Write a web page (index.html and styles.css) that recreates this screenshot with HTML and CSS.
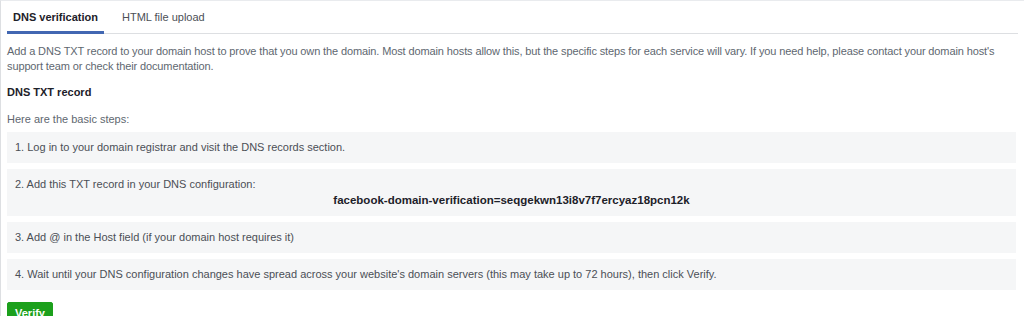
FILE: index.html
```html
<!DOCTYPE html>
<html lang="en">
<head>
    <meta charset="UTF-8">
    <title>Domain verification</title>
    <link rel="stylesheet" href="styles.css">
</head>
<body>
    <div class="panel">
        <div class="tabs">
            <div class="tab active">DNS verification</div>
            <div class="tab">HTML file upload</div>
        </div>
        <div class="content">
            <p class="intro">Add a DNS TXT record to your domain host to prove that you own the domain. Most domain hosts allow this, but the specific steps for each service will vary. If you need help, please contact your domain host's support team or check their documentation.</p>
            <h4 class="title">DNS TXT record</h4>
            <p class="lead">Here are the basic steps:</p>
            <div class="steps">
                <div class="step">1. Log in to your domain registrar and visit the DNS records section.</div>
                <div class="step">
                    2. Add this TXT record in your DNS configuration:
                    <div class="record">facebook-domain-verification=seqgekwn13i8v7f7ercyaz18pcn12k</div>
                </div>
                <div class="step">3. Add @ in the Host field (if your domain host requires it)</div>
                <div class="step">4. Wait until your DNS configuration changes have spread across your website's domain servers (this may take up to 72 hours), then click Verify.</div>
            </div>
            <button class="verify">Verify</button>
        </div>
    </div>
</body>
</html>
```

FILE: styles.css
```css
body {
    margin: 0;
    background: #ffffff;
    font-family: "Liberation Sans", Arial, sans-serif;
    font-size: 11px;
    color: #606770;
}

.panel {
    border-left: 1px solid #dddfe2;
    border-top: 1px solid #e9ebee;
    height: 316px;
    overflow: hidden;
    box-sizing: border-box;
}

.tabs {
    display: flex;
    gap: 12px;
    margin: 0 6px 0 6px;
    border-bottom: 1px solid #dddfe2;
}

.tab {
    padding: 10px 6px 7px;
    margin-bottom: -1px;
    border-bottom: 3px solid transparent;
    color: #4b4f56;
    font-size: 11px;
    line-height: 13px;
}

.tab.active {
    font-weight: bold;
    color: #1d2129;
    border-bottom-color: #4267b2;
}

.content {
    padding: 10px 8px 0 6px;
}

.intro {
    margin: 0 -6px 0 0;
    line-height: 15px;
    letter-spacing: -0.12px;
}

.title {
    margin: 10px 0 0;
    font-size: 11px;
    line-height: 16px;
    color: #1d2129;
}

.lead {
    margin: 11px 0 0;
    line-height: 16px;
}

.steps {
    display: flex;
    flex-direction: column;
    gap: 6px;
    margin-top: 5px;
}

.step {
    background: #f5f6f7;
    padding: 7px 8px 8px;
    line-height: 16px;
    color: #4b4f56;
}

.record {
    text-align: center;
    font-size: 11.5px;
    font-weight: bold;
    color: #1d2129;
}

.verify {
    display: block;
    margin-top: 12px;
    padding: 0 7px;
    height: 22px;
    border: 1px solid #1ca01c;
    border-radius: 2px;
    background: #1ca01c;
    color: #ffffff;
    font-family: inherit;
    font-size: 11px;
    font-weight: bold;
}
```
